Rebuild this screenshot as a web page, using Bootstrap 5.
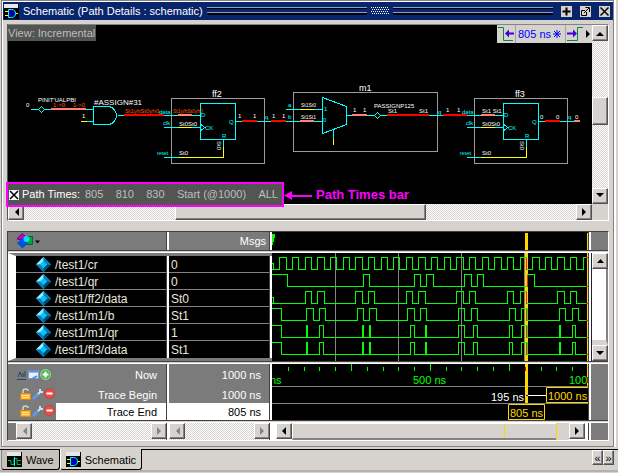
<!DOCTYPE html>
<html lang="en">
<head>
<meta charset="utf-8">
<meta name="viewport" content="width=device-width, initial-scale=1">
<title>Schematic (Path Details : schematic)</title>
<link href="https://cdn.jsdelivr.net/npm/bootstrap@5.3.0/dist/css/bootstrap.min.css" rel="stylesheet">
<style>
:root{--face:#d6d3ce;--shade:#7b7b7b;--dark:#424142;--navy:#08246b;--gold:#ffd700}
body{font:11px/14px "Liberation Sans",Arial,sans-serif;background:var(--face);color:#000}
button{font:inherit;color:inherit;padding:0;border:0;background:none}
svg{display:block;flex:none}
.window-pane{border:1px solid #848284;box-shadow:inset 1px 1px #fff,1px 0 #fff,2px 0 #fff;margin:0 4px 0 1px;padding:1px 0 5px 1px}
.title-strip{height:18px;background:var(--navy);color:#fff;padding:0 3px 0 1px}
.title-strip h1{font:11px/17px "Liberation Sans",Arial,sans-serif;margin:0}
.grip-line{height:8px;border-top:1px solid #8c9ece;border-bottom:2px solid #000;background:linear-gradient(#000 0 1px,transparent 1px 4px,#8c9ece 4px 5px,transparent 5px)}
.mini{width:11px;height:11px;background:var(--face);color:#000}
.bevel{background:var(--face);border:1px solid;border-color:#fff #525152 #525152 #fff;box-shadow:inset -1px -1px #848284;display:flex;align-items:center;justify-content:center;flex:none}
.checker{background:repeating-conic-gradient(#fff 0 25%,var(--face) 0 50%) 0 0/2px 2px}
.sq{width:16px;height:16px}
.schematic-frame{margin:4px 4px 10px 4px;border:1px solid;border-color:#848284 #fff #fff #525552}
.canvas{background:#000;height:179px;position:relative}
.view-tag{position:absolute;left:0;top:0;height:16px;width:88px;background:#525552;color:#bdbebd;line-height:16px;white-space:nowrap}
.time-nav{position:absolute;right:0;top:0;height:18px;background:var(--face);color:#0000ff}
.time-nav>*{height:18px}
.time-value{border:solid #a5a2a5;border-width:0 1px;padding:0 4px 0 2px;line-height:18px;width:51px;white-space:nowrap}
.path-bar{position:absolute;left:-2px;bottom:-3px;height:25px;width:278px;border:2px solid #ff00ff;background:#525552;color:#bdbebd;line-height:21px;padding:0 4px 0 1px;z-index:2}
.path-bar .caption-text{color:#fff;width:63px;margin-left:3px}
.path-callout{position:absolute;left:276px;bottom:1px;color:#ff00ff;font:bold 13px/16px "Liberation Sans",Arial,sans-serif}
.wave-frame{margin:0 4px 0 4px;border:1px solid;border-color:#424142 #fff #fff #424142;background:var(--shade)}
.pane-row{display:grid;grid-template-columns:161px 103px minmax(0,1fr) 17px}
.pane-row>.rule{grid-column:1/-1;height:3px;border-top:1px solid var(--dark);background:linear-gradient(var(--face) 50%,#fff 50%)}
.split{border-right:2px solid #fff;position:relative}
.split::after{content:"";position:absolute;right:0;top:0;bottom:0;width:1px;background:var(--dark)}
.msgs-head{line-height:18px}
.wave{background:#000;overflow:hidden;border-right:2px solid #fff;box-shadow:inset -1px 0 var(--dark)}
.signals{grid-column:1/3;table-layout:fixed;width:264px;border-collapse:separate;border-spacing:0}
.signals td,.signals th{padding:0;font-weight:400;height:17px;line-height:16px;white-space:nowrap}
.names{border:solid;border-width:3px 0 3px 8px;border-color:var(--shade) #fff;font-size:12px}
.names th,.names td{background:linear-gradient(#000 16px,#848284 16px);color:#e7e7de}
.names tr:last-child>*{background:#000}
.names td{padding-left:2px}
.names th>div{padding-left:8px}
.signals th,.signals td{border-right:2px solid #fff;box-shadow:inset -1px 0 var(--dark)}
.cursors{color:#fff;text-align:right}
.cursors td{padding-right:9px}
.cursors th{padding-right:10px}
.cursors .picked{background:#fff;color:#000}
.cursors tr:first-child>*{height:22px;line-height:22px}
.icons-slot{width:48px;padding-left:9px}
.wave-thumb{background:var(--face);border:solid;border-width:1px 0 2px 1px;border-color:#fff var(--gold) #848284 #fff}
.mark-line{width:1px;background:var(--gold)}
.bottom-tabs{border-top:1px solid #000;margin-top:2px;padding-left:1px;height:23px;background:var(--face);border-bottom:2px solid #b5b2ad}
.tab-item{height:20px;border:1px solid #000;border-top:0;border-left-color:#848284;border-radius:0 0 3px 3px;color:#000;text-decoration:none;line-height:18px;padding:0 5px;background:#c6c3bd}
.tab-item.current{background:var(--face);border-left-color:#fff;margin-top:-1px;height:21px;padding-top:1px}
.tab-item svg{margin:0 4px 0 0}
.tab-arrow{width:11px;height:15px}
</style>
<script src="https://cdn.jsdelivr.net/npm/bootstrap@5.3.0/dist/js/bootstrap.bundle.min.js"></script>
</head>
<body>
<svg width="0" height="0" class="position-absolute" aria-hidden="true">
<defs>
<symbol id="gem" viewBox="0 0 15 15"><path fill="#18aee7" d="M7.500 0 15 7.500 7.500 15 0 7.500z"/><path fill="#9cebff" d="M7.500 0V4L4 7.500H0z"/><path fill="#087db5" d="M7.500 0 15 7.500H11L7.500 4z"/><path fill="#087dbd" d="M0 7.500H4L7.500 11V15z"/><path fill="#00496b" d="M15 7.500H11L7.500 11V15z"/><path fill="#00c7ff" d="M7.500 4 11 7.500 7.500 11 4 7.500z"/></symbol>
<symbol id="gate" viewBox="0 0 15 15"><path fill="#000" d="M0 0h15v15H0z"/><path fill="#e7e7e7" d="M0 0h14v4H0z"/><path stroke="#ffff00" d="M1 7.500h4M1 11.500h4M10 9.500h4"/><path fill="#0000a5" stroke="#00ffff" d="M4.500 5.500h3c3 0 4 2 4 4s-1 4-4 4h-3z"/></symbol>
<symbol id="waves" viewBox="0 0 15 15"><path fill="#000" d="M0 0h15v15H0z"/><path fill="#e7e7e7" d="M0 0h14v4H0z"/><path fill="none" stroke="#00b54a" d="M1 8.500h3v4h3v-6h3v6M10 8.500h4M10 12.500h4"/><path stroke="#00ffff" d="M7.500 5v9"/></symbol>
<symbol id="lock" viewBox="0 0 11 12"><path fill="none" stroke="#d6d3ce" stroke-width="1.500" d="M3 6V3q0-2 2.500-2T8 3"/><path fill="#ffb531" stroke="#d68a18" d="M.5 5.500h10v6H.5z"/><path stroke="#ffe39c" d="M2 7.500h7M2 9.500h7"/></symbol>
<symbol id="wrench" viewBox="0 0 12 12"><path stroke="#5a9af7" stroke-width="3" stroke-linecap="round" d="M2 10 6 6"/><path fill="none" stroke="#d6dfe7" stroke-width="2" d="M6 6l2-2M8 1v3h3"/></symbol>
<symbol id="minus" viewBox="0 0 11 11"><circle cx="5.500" cy="5.500" r="5" fill="#e74d4a" stroke="#c64142"/><path stroke="#fff" stroke-width="2" d="M2.500 5.500h6"/></symbol>
<symbol id="plus" viewBox="0 0 11 11"><circle cx="5.500" cy="5.500" r="5" fill="#4ab54a" stroke="#9cdf9c"/><path stroke="#fff" stroke-width="2" d="M2.500 5.500h6M5.500 2.500v6"/></symbol>
<g id="flipflop" stroke="none" font-size="6">
<path fill="none" stroke="#9c9a9c" d="M171.500 98.500h93v65h-93z"/>
<path fill="none" stroke="#00ffff" d="M200.500 103.500h35v36h-35zM164 115.500h36M164 127.500h36M164 157.500h14M223.500 140v7M236 121.500h7M257 121.500h14M201 124.500l4 3-4 3"/>
<path fill="none" stroke="#ffff00" d="M178 127.500h14M178 157.500h45.500V147"/>
<path stroke="#ff8273" stroke-width="2" d="M178 115h14"/><path stroke="#ff0000" stroke-width="2" d="M242 121h15"/>
<g fill="#00ffff"><text x="201" y="117">D</text><text x="205" y="130">CK</text><text x="229" y="124">Q</text><text x="222" y="138">R</text><text x="159" y="114">data</text><text x="163" y="125">clk</text><text x="157" y="155" font-size="5">reset</text><text x="265" y="119">q</text></g>
<g fill="#fff"><text x="179" y="126">St0St0</text><text x="179" y="155">St0</text><text transform="translate(217 141) rotate(90)">St0</text></g>
</g>
</defs>
</svg>

<main class="window-pane">
<header class="title-strip d-flex align-items-center gap-1">
  <svg width="15" height="15"><use href="#gate"/></svg>
  <h1 class="text-nowrap">Schematic (Path Details : schematic)</h1>
  <div class="grip-line flex-fill"></div><svg width="18" height="8" fill="#fff" id="grip"></svg><div class="grip-line flex-fill"></div>
  <button class="mini ms-1" aria-label="Dock"><svg width="11" height="11"><path stroke="#000" stroke-width="2" d="M1.500 5.500h8M5.500 1.500v8"/></svg></button>
  <button class="mini ms-1" aria-label="Undock"><svg width="11" height="11" fill="none" stroke="#000"><path d="M5 4.500H1.500v5h5V6M4 7l5-5M5.500 1.500h4V6"/></svg></button>
  <button class="mini ms-1" aria-label="Close"><svg width="11" height="11"><path stroke="#000" stroke-width="1.500" d="M1.500 1.500l8 8M9.500 1.500l-8 8"/></svg></button>
</header>

<section class="schematic-frame d-flex" aria-label="Schematic">
 <div class="flex-fill">
  <div class="canvas">
   <svg width="584" height="179" viewBox="8 25 584 179" font-size="6" fill="#fff" shape-rendering="crispEdges">
    <use href="#flipflop"/><use href="#flipflop" x="303"/>
    <path fill="none" stroke="#9c9a9c" d="M293.500 92.500h144v59h-144z"/>
    <g fill="none" stroke="#00ffff"><path d="M31 109.500h8M44 109.500h49M87 121.500h6M93.500 106.500h14c6 0 9 5 9 9s-3 9-9 9h-14zM118 115.500h53M38.500 109.500l3-3 3 3-3 3zM286 109.500h36M286 121.500h36M322.500 97.500l24 9v18l-24 9zM333.500 130v9M347 115.500h27M374.500 115.500l3-3 3 3-3 3zM381 115.500h93M560 121.500h15"/></g>
    <path stroke="#ffff00" d="M81 121.500h6M300 109.500h14M333.500 139v6"/>
    <path stroke="#ff8273" stroke-width="2" d="M51 109h35M300 121h14M352 115h15M574 121h6"/>
    <path stroke="#ff0000" stroke-width="2" d="M124 115h40M271 121h15M387 115h42M443 115h24"/>
    <text x="26" y="107">0</text><text x="38" y="102">PINIT'UALPBI</text><text x="94" y="105" font-size="8">#ASSIGN#31</text><text x="82" y="118">1</text>
    <g fill="#ff5500"><text x="53" y="107">1-&gt;0</text><text x="73" y="107">1-&gt;0</text><text x="125" y="113">St1yhSt0yh0</text><text x="173" y="113" font-size="5">St1y/hSt0yh0</text></g>
    <g font-size="9"><text x="212" y="97">ff2</text><text x="359" y="91">m1</text><text x="515" y="97">ff3</text></g>
    <text x="238" y="118">1</text><text x="253" y="118">1</text><text x="272" y="118">1</text><text x="282" y="118">1</text>
    <text x="301" y="107" font-size="5">St1St0</text><text x="301" y="119" font-size="5">St1St1</text>
    <g fill="#00ffff"><text x="288" y="107">a</text><text x="288" y="119">b</text><text x="324" y="111">1</text><text x="323" y="122">0</text><text x="438" y="114">q</text></g>
    <text x="353" y="112">1</text><text x="363" y="112">1</text><text x="374" y="108">PASSIGNP125</text><text x="388" y="113">St1</text><text x="419" y="113">St1</text><text x="446" y="112">1</text><text x="457" y="112">1</text><text x="482" y="113">St1 St1</text>
    <text x="540" y="119">0</text><text x="556" y="119">0</text><text x="575" y="119">0</text>
   </svg>
   <div class="view-tag">View: Incremental</div>
   <div class="time-nav d-flex">
    <button aria-label="Previous time"><svg width="18" height="18" fill="none"><path stroke="#008a4a" d="M1 2.500h5.500v13H16"/><path fill="#4200d6" d="M8 8.500l4-4v3h5v2h-5v3z"/></svg></button>
    <div class="time-value d-flex justify-content-between align-items-center"><span>805 ns</span><svg width="8" height="8"><path stroke="#0000ff" d="M4 0v8M0 4h8M1 1l6 6M7 1l-6 6"/></svg></div>
    <button aria-label="Next time"><svg width="18" height="18" fill="none"><path stroke="#008a4a" d="M1 15.500h10.500v-13H17"/><path fill="#4200d6" d="M11 8.500l-4-4v3H1v2h6v3z"/></svg></button>
    <button aria-label="More"><svg width="8" height="18"><path d="M2 5v8l4-4z"/></svg></button>
   </div>
   <div class="path-bar d-flex align-items-center">
    <button class="bg-light" aria-label="Close path times"><svg width="10" height="10"><path stroke="#000" stroke-width="1.500" d="M1 1l8 8M9 1l-8 8"/></svg></button>
    <span class="caption-text text-nowrap">Path Times:</span>
    <div class="d-flex flex-fill justify-content-between text-nowrap"><button>805</button><button>810</button><button>830</button><button>Start (@1000)</button><button>ALL</button></div>
   </div>
   <div class="path-callout d-flex align-items-center text-nowrap gap-1"><svg width="28" height="9" fill="#ff00ff"><path d="M0 4.500L8 0v9zM7 4h21v2H7z"/></svg>Path Times bar</div>
  </div>
  <div class="d-flex checker">
   <button class="bevel sq" aria-label="Scroll left"><svg width="5" height="8"><path d="M5 0v8L1 4z"/></svg></button>
   <div style="flex:152"></div><div class="bevel sq" style="flex:249"></div><div style="flex:151"></div>
   <button class="bevel sq" aria-label="Scroll right"><svg width="5" height="8"><path d="M0 0v8l4-4z"/></svg></button>
  </div>
 </div>
 <div class="d-flex flex-column checker">
  <button class="bevel sq" aria-label="Scroll up"><svg width="8" height="5"><path d="M0 5h8L4 1z"/></svg></button>
  <div style="flex:57"></div><div class="bevel sq" style="flex:26"></div><div style="flex:64"></div>
  <button class="bevel sq" aria-label="Scroll down"><svg width="8" height="5"><path d="M0 0h8L4 4z"/></svg></button>
  <div class="sq" style="background:var(--face)"></div>
 </div>
</section>

<section class="wave-frame" aria-label="Wave">
 <div class="pane-row text-white">
  <div class="split d-flex align-items-center ps-2"><svg width="26" height="18"><path fill="#00a53a" stroke="#006b29" d="M10.500 4.500h6v8h-6z"/><path fill="#c600c6" stroke="#6b006b" d="M1 7l5-5.500L10 5 6 8z"/><path fill="#0051de" d="M6.500 6l5.500 5-5.500 5.500L1 11z"/><circle cx="10.500" cy="7" r="3" fill="#00dfff"/><path d="M19 8.500h5l-2.500 3z"/></svg></div>
  <div class="split text-end pe-1 msgs-head">Msgs</div>
  <div class="wave"><svg width="316" height="18" viewBox="272 232 316 18"><path fill="#00ff00" d="M272 234h3v4h-1v4h-1v3h-1z"/><path fill="#ffd700" d="M525 233h3v17h-3zM587 233h1v17h-1z"/></svg></div><div></div>
  <div class="rule"></div>
 </div>
 <div class="pane-row">
  <table class="signals names"><colgroup><col style="width:153px"><col style="width:103px"></colgroup><tbody id="signalRows"></tbody></table>
  <div class="wave"><svg id="waveArea" width="316" height="108" viewBox="272 253 316 108" shape-rendering="crispEdges"></svg></div>
  <div class="d-flex flex-column bg-white border-start border-dark">
   <button class="bevel sq" aria-label="Scroll waves up"><svg width="7" height="4"><path d="M0 4h7L3.500 0z"/></svg></button>
   <div class="flex-fill" style="border-right:2px solid #848284;border-bottom:5px solid #d6d3ce"></div>
   <button class="bevel sq" aria-label="Scroll waves down"><svg width="8" height="4"><path d="M0 0h8L4 4z"/></svg></button>
  </div>
  <div class="rule"></div>
 </div>
 <div class="pane-row">
  <table class="signals cursors"><colgroup><col style="width:161px"><col style="width:103px"></colgroup>
   <tbody>
   <tr><th scope="row"><div class="d-flex align-items-center"><span class="icons-slot d-flex"><svg width="34" height="12"><path fill="none" stroke="#294563" d="M0 10.500h9M1 8l2-5 2 5M6 4v4M8 2v6"/><path fill="#e7efff" stroke="#7b9ade" d="M11.500 1.500h10v8h-10z"/><path stroke="#5a8ade" stroke-width="2" d="M12 2.500h9M15 10l5-3"/><use href="#plus" x="23" width="11" height="11"/></svg></span><span class="flex-fill">Now</span></div></th><td>1000 ns</td></tr>
   <tr><th scope="row"><div class="d-flex align-items-center"><span class="icons-slot d-flex"><svg width="38" height="13"><use href="#lock" x="3" width="11" height="12"/><use href="#wrench" x="15" width="12" height="12"/><use href="#minus" x="27" width="11" height="11"/></svg></span><span class="flex-fill">Trace Begin</span></div></th><td>1000 ns</td></tr>
   <tr><th scope="row" style="background:linear-gradient(90deg,var(--shade) 48px,#fff 48px)"><div class="d-flex align-items-center text-black"><span class="icons-slot d-flex"><svg width="38" height="13"><use href="#lock" x="3" width="11" height="12"/><use href="#wrench" x="15" width="12" height="12"/><use href="#minus" x="27" width="11" height="11"/></svg></span><span class="flex-fill">Trace End</span></div></th><td class="picked">805 ns</td></tr>
   </tbody></table>
  <div class="wave"><svg id="timeline" width="316" height="56" viewBox="272 364 316 56" font-size="11" fill="#00ff00">
   <path stroke="#848284" d="M272 386.500h316M272 403.500h316"/>
   <path id="ticks" stroke="#00ff00"/>
   <path fill="#ffd700" d="M525 364h3v39h-3zM587 364h1v22h-1z"/><path fill="#ff0000" d="M525 367h1v4h-1zM587 377h1v6h-1z"/>
   <text x="270" y="384">ns</text><text x="413" y="384">500 ns</text><text x="569" y="384">100</text>
   <text x="491" y="401" fill="#fff">195 ns</text><path stroke="#fff" d="M528 395.500h18"/><path stroke="#0000ff" d="M526 395.500h2"/>
   <path fill="#000" stroke="#ffd700" d="M546.500 387.500h44v15h-44zM508.500 404.500h36v15h-36z"/>
   <g fill="#ffd700"><text x="548" y="400">1000 ns</text><text x="510" y="417">805 ns</text></g>
  </svg></div><div></div>
  <div class="rule"></div>
 </div>
 <div class="pane-row">
  <div class="split d-flex ps-2"><div class="d-flex flex-fill checker"><button class="bevel sq" aria-label="Names left"><svg width="5" height="8"><path fill="#848284" d="M5 0v8L1 4z"/></svg></button><span class="flex-fill"></span><button class="bevel sq" aria-label="Names right"><svg width="5" height="8"><path fill="#848284" d="M0 0v8l4-4z"/></svg></button></div></div>
  <div class="split d-flex checker"><button class="bevel sq" aria-label="Values left"><svg width="5" height="8"><path fill="#848284" d="M5 0v8L1 4z"/></svg></button><span class="flex-fill"></span><button class="bevel sq" aria-label="Values right"><svg width="5" height="8"><path fill="#848284" d="M0 0v8l4-4z"/></svg></button></div>
  <div class="wave d-flex bg-white ps-1"><button class="bevel sq" aria-label="Time left"><svg width="5" height="8"><path d="M4 0v8L0 4z"/></svg></button><div class="wave-thumb d-flex" style="flex:266"><div style="flex:213"></div><div class="mark-line"></div><div style="flex:51"></div></div><div class="mark-line"></div><div style="flex:12;background:var(--face)"></div><button class="bevel sq me-1" aria-label="Time right"><svg width="5" height="8"><path d="M0 0v8l4-4z"/></svg></button></div>
  <div style="height:17px"></div>
 </div>
</section>
</main>

<nav class="bottom-tabs d-flex align-items-start" aria-label="Panes">
 <a class="tab-item d-flex align-items-center" href="#wave"><svg width="15" height="15"><use href="#waves"/></svg>Wave</a>
 <a class="tab-item current d-flex align-items-center" href="#schematic" aria-current="page"><svg width="15" height="15"><use href="#gate"/></svg>Schematic</a>
 <div class="d-flex ms-auto me-1"><button class="bevel tab-arrow" aria-label="Previous tab">«</button><button class="bevel tab-arrow" aria-label="Next tab">»</button></div>
</nav>

<script>
const clock=[279,286,292,298,305,311,317,324,330,336,343,349,355,362,368,374,381,387,393,399,406,412,418,425,431,437,444,450,456,463,469,475,482,488,494,501,507,513,520,526,532,539,545,551,557,564,570,576,583];
const pulses=[306,307,319,323,362,363,369,370,410,414,425,426,458,464,473,477,509,512,521,527,559,560,572,575];
// Each signal: name, value, starting level, times at which the level toggles
const signals=[
 ['/test1/cr','0',0,clock],
 ['/test1/qr','0',1,[287,363,369,414,420,426,433,464,471,477,483,527,534]],
 ['/test1/ff2/data','St0',0,[305,311,317,324,355,362,368,374,406,412,418,425,456,463,469,475,507,513,520,526,557,564,570,576]],
 ['/test1/m1/b','St1',1,[281,306,313,319,325,357,363,369,376,407,414,420,426,458,464,471,477,509,515,521,527,559,565,572,578]],
 ['/test1/m1/qr','1',1,[281,...pulses]],
 ['/test1/ff3/data','St1',1,[281,...pulses]]];
let art='<path stroke="#848284" d="M335.500 253v108M398.500 253v108M461.500 253v108M524.500 253v108"/><path fill="#ffd700" d="M525 253h3v108h-3zM587 253h1v108h-1z"/>';
signals.forEach(([name,value,start,edges],i)=>{
 const top=257.5+17*i;let level=start,d=`M272 ${top+(level?0:12)}`;
 edges.forEach(x=>{level=1-level;d+=`H${x+.5}V${top+(level?0:12)}`});
 art+=`<path fill="none" stroke="#00ff00" d="${d}H588"/><path stroke="#ff2020" d="M${i==1?527:526}.500 ${top}v12M586 ${top+(level?0:12)}h2"/>`;
 if(i==0||i==2)art+=`<path fill="none" stroke="#00ff00" d="M272 ${top+6}h1.500v6"/>`;
 document.getElementById('signalRows').insertAdjacentHTML('beforeend',`<tr><th scope="row"><div class="d-flex align-items-center ms-2"><svg class="ms-1 me-1" width="15" height="15"><use href="#gem"/></svg>${name}</div></th><td>${value}</td></tr>`);
});
document.getElementById('waveArea').innerHTML=art;
document.getElementById('ticks').setAttribute('d',[288,304,319,335,351,367,383,398,414,430,446,461,477,493,509,541,556,572].map(x=>`M${x}.500 ${[351,430,509].includes(x)?364:367}V371`).join(''));
let dots='';for(let r=0;r<4;r++)for(let c=r%2;c<18;c+=2)dots+=`M${c} ${r*2}h1v1h-1z`;
document.getElementById('grip').innerHTML=`<path d="${dots}"/>`;
</script>
</body>
</html>
